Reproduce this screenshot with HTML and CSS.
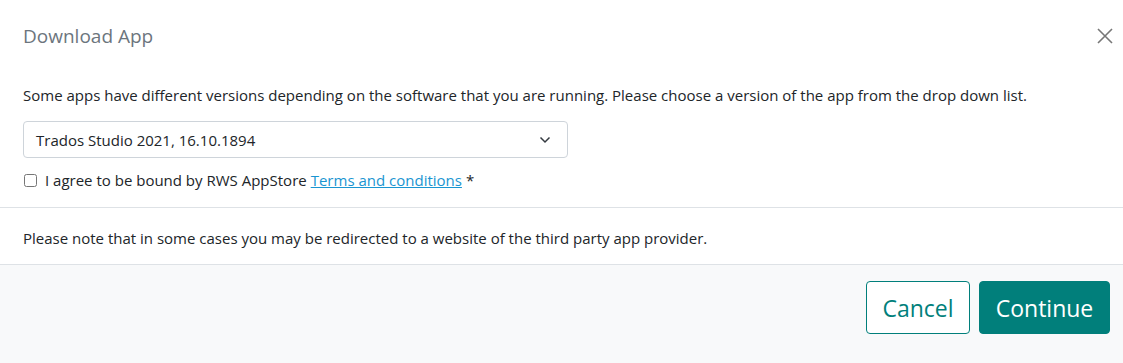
FILE: index.html
```html
<!DOCTYPE html>
<html lang="en">
<head>
    <meta charset="UTF-8">
    <meta name="viewport" content="width=device-width, initial-scale=1.0">
    <title>Download App</title>
    <link rel="stylesheet" href="styles.css">
</head>
<body>

    <div class="modal">
        <div class="modal-header">
            <h5 class="modal-title">Download App</h5>
            <button type="button" class="close-button" aria-label="Close">
                <svg width="16" height="16" viewBox="0 0 16 16">
                    <path d="M1 1 L15 15 M15 1 L1 15" stroke="#777" stroke-width="1.6" fill="none"/>
                </svg>
            </button>
        </div>

        <div class="modal-body">
            <p>Some apps have different versions depending on the software that you are running. Please choose a version of the app from the drop down list.</p>
            <div class="select-box">
                <span>Trados Studio 2021, 16.10.1894</span>
                <svg width="12" height="8" viewBox="0 0 12 8">
                    <path d="M1.5 1.5 L6 6 L10.5 1.5" stroke="#343a40" stroke-width="1.5" fill="none"/>
                </svg>
            </div>
            <label class="agree">
                <input type="checkbox">
                I agree to be bound by RWS AppStore <a href="#">Terms and conditions</a> *
            </label>
        </div>

        <div class="modal-note">
            Please note that in some cases you may be redirected to a website of the third party app provider.
        </div>

        <!-- footer buttons -->
        <div class="modal-footer">
            <button type="button" class="btn btn-outline">Cancel</button>
            <button type="button" class="btn btn-primary">Continue</button>
        </div>
    </div>

</body>
</html>
```

FILE: styles.css
```css
body {
    font-family: 'Open Sans', 'Noto Sans', sans-serif;
    margin: 0;
    background-color: white;
    color: #212529;
}

.modal {
    width: 1123px;
    height: 363px;
    display: flex;
    flex-direction: column;
}

.modal-header {
    display: flex;
    justify-content: space-between;
    align-items: center;
    padding: 22px 10px 0 23px;
    height: 28px;
}

.modal-title {
    margin: 0;
    font-size: 19px;
    font-weight: normal;
    color: #6c757d;
}

.close-button {
    background: none;
    border: none;
    padding: 0;
    width: 16px;
    height: 16px;
    cursor: pointer;
}

.modal-body {
    padding: 0 23px;
    font-size: 15px;
}

.modal-body p {
    margin: 35px 0 16px;
    line-height: 20px;
}

.select-box {
    width: 515px;
    height: 35px;
    border: 1px solid #ced4da;
    border-radius: 4px;
    display: flex;
    justify-content: space-between;
    align-items: center;
    padding: 0 16px 0 12px;
}

.agree {
    display: flex;
    align-items: center;
    margin-top: 12px;
    padding-bottom: 17px;
    line-height: 20px;
}

.agree input {
    margin: 0 8px 0 1px;
    width: 13px;
    height: 13px;
}

.agree a {
    color: #1a95d1;
    margin: 0 4px;
}

.modal-note {
    border-top: 1px solid #dee2e6;
    border-bottom: 1px solid #dee2e6;
    padding: 20px 23px 16px;
    font-size: 15px;
    line-height: 20px;
}

.modal-footer {
    flex: 1;
    background-color: #f8f9fa;
    display: flex;
    justify-content: flex-end;
    align-items: flex-start;
    gap: 9px;
    padding: 16px 13px 0 0;
}

.btn {
    font-family: inherit;
    font-size: 23px;
    height: 53px;
    border-radius: 4px;
    cursor: pointer;
}

.btn-outline {
    background-color: white;
    color: #017f7b;
    border: 1px solid #017f7b;
    width: 104px;
}

.btn-primary {
    background-color: #017f7b;
    color: white;
    border: 1px solid #017f7b;
    width: 131px;
}
```
